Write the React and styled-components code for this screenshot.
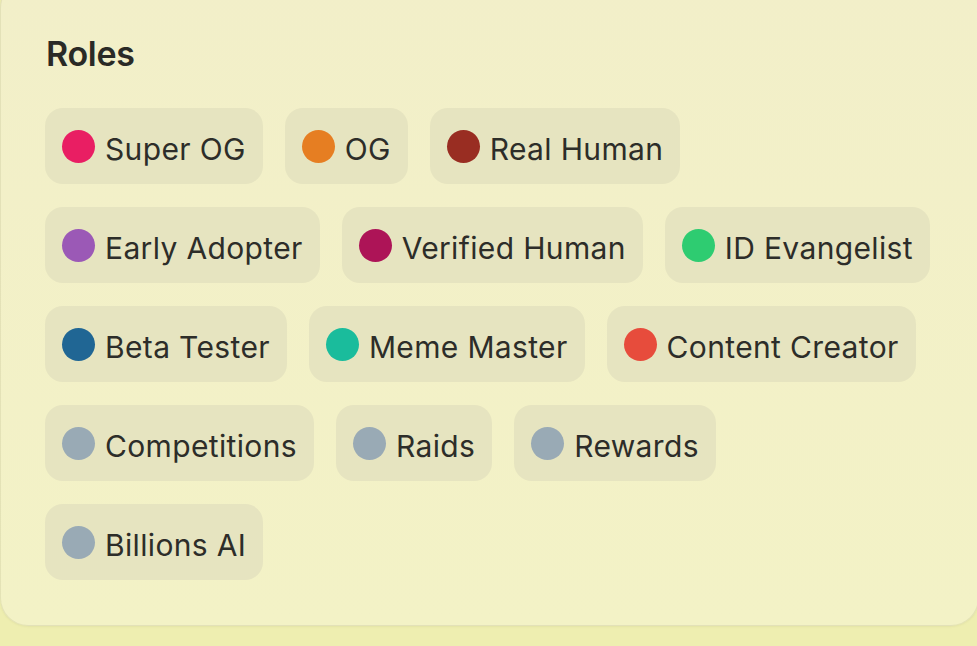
import React from "react";
import styled, { createGlobalStyle } from "styled-components";

const GlobalStyle = createGlobalStyle`
  html, body {
    margin: 0;
    padding: 0;
    background: #eeeeb0;
    overflow: hidden;
  }
  body {
    font-family: Inter, "Noto Sans", "Liberation Sans", sans-serif;
  }
`;

const Page = styled.div`
  width: 977px;
  height: 646px;
  overflow: hidden;
`;

const Card = styled.section`
  box-sizing: border-box;
  width: 979px;
  margin-top: -20px;
  padding: 53px 46px 45px 44px;
  border: 1px solid rgba(160, 160, 110, 0.18);
  border-radius: 28px;
  background: linear-gradient(180deg, #f2efc9 0%, #f3f2c6 100%);
  box-shadow: 0 1px 2px rgba(120, 120, 60, 0.08);
`;

const Title = styled.h2`
  margin: 0 0 34px 1px;
  font-size: 34px;
  line-height: 40px;
  font-weight: 600;
  color: #2a2a26;
  letter-spacing: -0.3px;
`;

const RoleList = styled.ul`
  list-style: none;
  margin: 0;
  padding: 0;
  display: flex;
  flex-wrap: wrap;
  gap: 23px 22px;
`;

const Pill = styled.li`
  box-sizing: border-box;
  display: inline-flex;
  align-items: center;
  gap: 10px;
  height: 76px;
  padding: 0 17px;
  border-radius: 18px;
  background: #e6e4c0;
  white-space: nowrap;
`;

const Dot = styled.span`
  flex: none;
  width: 33px;
  height: 33px;
  border-radius: 50%;
  background: ${(p) => p.$color};
`;

const Label = styled.span`
  padding-top: 6px;
  font-size: 30px;
  line-height: 36px;
  letter-spacing: 0.35px;
  color: #2d2d29;
`;

const roles = [
  { name: "Super OG", color: "#e91e63" },
  { name: "OG", color: "#e67e22" },
  { name: "Real Human", color: "#992d22" },
  { name: "Early Adopter", color: "#9b59b6" },
  { name: "Verified Human", color: "#ad1457" },
  { name: "ID Evangelist", color: "#2ecc71" },
  { name: "Beta Tester", color: "#206694" },
  { name: "Meme Master", color: "#1abc9c" },
  { name: "Content Creator", color: "#e74c3c" },
  { name: "Competitions", color: "#99aab5" },
  { name: "Raids", color: "#99aab5" },
  { name: "Rewards", color: "#99aab5" },
  { name: "Billions AI", color: "#99aab5" },
];

export default function App() {
  return (
    <Page>
      <GlobalStyle />
      <Card>
        <Title>Roles</Title>
        <RoleList>
          {roles.map((r) => (
            <Pill key={r.name}>
              <Dot $color={r.color} />
              <Label>{r.name}</Label>
            </Pill>
          ))}
        </RoleList>
      </Card>
    </Page>
  );
}
